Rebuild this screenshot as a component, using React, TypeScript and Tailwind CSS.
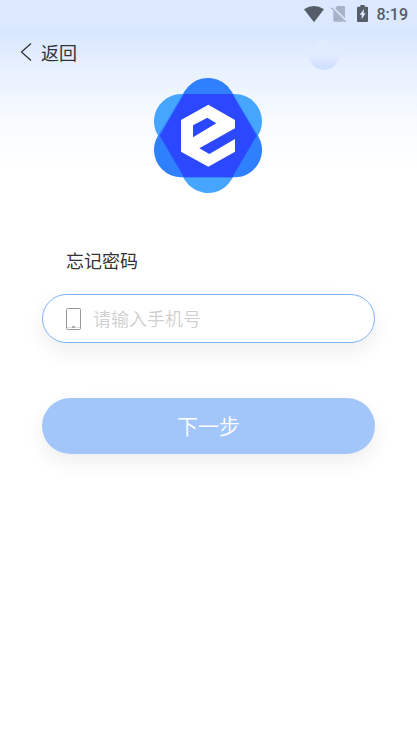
import { useState } from "react";

const StatusBar = () => (
  <div className="flex h-7 items-center justify-end pr-[9px] text-[#555d68]">
    {/* Wifi */}
    <svg width="20" height="16" viewBox="0 0 60 48" className="mr-[7px]" fill="currentColor" aria-hidden="true">
      <path d="M0 10 Q30 -10 60 10 L31 47 Q30 48 29 47 Z" />
    </svg>

    {/* No sim card */}
    <svg width="16" height="18" viewBox="0 0 48 54" className="mr-[10px]" aria-hidden="true">
      <path d="M19 3 H38 Q42 3 42 7 V40 L12 10 Z" fill="#a6b3c6" />
      <path d="M7 16 L39 48 Q38 50 36 50 H11 Q7 50 7 46 Z" fill="#a6b3c6" />
      <path d="M4 6 L46 48" stroke="#dbe8fe" strokeWidth="4" />
      <path d="M1 8 L44 51" stroke="#a6b3c6" strokeWidth="4" />
    </svg>

    {/* Charging battery */}
    <svg width="11" height="18" viewBox="0 0 33 54" className="mr-[9px]" aria-hidden="true">
      <path d="M10 0 H23 V5 H30 Q33 5 33 8 V48 Q33 51 30 51 H3 Q0 51 0 48 V8 Q0 5 3 5 H10 Z" fill="currentColor" />
      <path d="M21 12 L8 29 H14 V43 L26 25 H20 Z" fill="#dbe8fe" />
    </svg>

    <span className="pt-0.5 font-['Roboto',sans-serif] text-base leading-7 font-medium">8:19</span>
  </div>
);

const Logo = () => (
  <svg width="109" height="115" viewBox="27 24 327 345" role="img" aria-label="Logo">
    <path d="M109 154 H269 L189 287 Z" fill="#46a6ff" stroke="#46a6ff" strokeWidth="164" strokeLinejoin="round" />
    <path d="M189 106 L269 240 H109 Z" fill="#2e80ff" stroke="#2e80ff" strokeWidth="164" strokeLinejoin="round" />
    {/* where the two triangles overlap */}
    <path d="M117 72 H262 L335 197 L262 322 H117 L44 197 Z" fill="#2c48ff" />
    <path
      fill="#fff"
      fillRule="evenodd"
      d="M190 104 L270 150 V175 L163 235 L193 252 L270 207 V245 L190 290 L108 245 V150 Z M144 166 L187 143 L214 160 L144 202 Z"
    />
  </svg>
);

const App = () => {
  const [phone, setPhone] = useState("");

  return (
    <div className="min-h-screen bg-white bg-[linear-gradient(to_bottom,#dbe8ff_0px,#dbe8fe_26px,#d7e6fe_31px,#e9f1ff_70px,#f7faff_120px,#ffffff_168px)] font-['Noto_Sans_CJK_SC',sans-serif] text-[#333]">
      <StatusBar />

      {/* Header */}
      <header className="relative flex h-12 items-center px-5">
        <button type="button" className="flex items-center gap-[9px]">
          <svg width="12" height="20" viewBox="0 0 12 20" fill="none" stroke="currentColor" strokeWidth="1.3" aria-hidden="true">
            <path d="M11 1.5 L1.5 10 L11 18.5" />
          </svg>
          <span className="text-lg leading-7">返回</span>
        </button>
        <div className="absolute top-3 right-[78px] h-[30px] w-[30px] rounded-full bg-linear-to-b from-[#e1ecff] via-[#e1ebff] to-[#cddeff]" />
      </header>

      <main className="px-[42px]">
        <div className="flex justify-center pt-[2px]">
          <Logo />
        </div>

        <form onSubmit={(e) => e.preventDefault()}>
          <label htmlFor="phone" className="mt-[53px] block pl-6 text-lg leading-7">
            忘记密码
          </label>

          <div className="mt-5 flex h-[49px] items-center rounded-full border border-[#7fb2fb] bg-white px-[23px] shadow-[0_8px_20px_rgba(0,0,0,0.07)]">
            <svg width="15" height="22" viewBox="0 0 15 22" fill="none" stroke="#999" className="shrink-0" aria-hidden="true">
              <rect x="0.5" y="0.5" width="14" height="21" rx="1" />
              <path d="M1 19.5 H14" stroke="#ddd" />
              <path d="M6 19 H9" strokeWidth="1.5" />
            </svg>
            <input
              id="phone"
              type="tel"
              value={phone}
              onChange={(e) => setPhone(e.target.value)}
              placeholder="请输入手机号"
              className="ml-3 h-full w-full min-w-0 bg-transparent pb-0.5 text-lg font-[350] outline-none placeholder:text-[#d0d0d0]"
            />
          </div>

          <button
            type="submit"
            className="mt-[55px] h-14 w-full rounded-full bg-[#a3c6fa] text-[21px] font-[350] text-white shadow-[0_8px_20px_rgba(0,0,0,0.07)]"
          >
            下一步
          </button>
        </form>
      </main>
    </div>
  );
};

export default App;
